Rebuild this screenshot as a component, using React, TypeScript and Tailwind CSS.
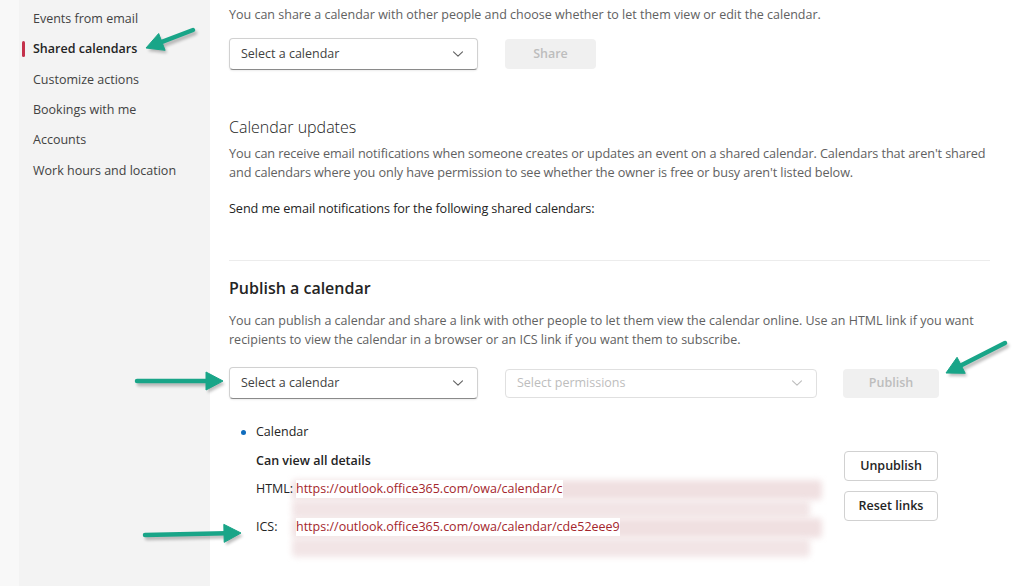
import React from "react";

const font = { fontFamily: '"Open Sans", "Noto Sans", Arial, sans-serif' };

function Chevron({ color = "#616161" }: { color?: string }) {
  return (
    <svg width="14" height="14" viewBox="0 0 14 14" fill="none">
      <path d="M2.5 4.8 L7 9.2 L11.5 4.8" stroke={color} strokeWidth="1.1" strokeLinecap="round" strokeLinejoin="round" />
    </svg>
  );
}

function Arrow({ x1, y1, x2, y2 }: { x1: number; y1: number; x2: number; y2: number }) {
  const dx = x2 - x1;
  const dy = y2 - y1;
  const len = Math.sqrt(dx * dx + dy * dy);
  const ux = dx / len;
  const uy = dy / len;
  const hl = 17;
  const hw = 9;
  const bx = x2 - ux * hl;
  const by = y2 - uy * hl;
  const px = -uy;
  const py = ux;
  const pts = `${x2},${y2} ${bx + px * hw},${by + py * hw} ${bx - px * hw},${by - py * hw}`;
  return (
    <g>
      <g transform="translate(2,3)" opacity="0.25" filter="url(#shadowblur)">
        <line x1={x1} y1={y1} x2={bx + ux * 2} y2={by + uy * 2} stroke="#000" strokeWidth="4.5" strokeLinecap="round" />
        <polygon points={pts} fill="#000" />
      </g>
      <line x1={x1} y1={y1} x2={bx + ux * 2} y2={by + uy * 2} stroke="#19a588" strokeWidth="4.5" strokeLinecap="round" />
      <polygon points={pts} fill="#19a588" strokeLinejoin="round" stroke="#19a588" strokeWidth="1" />
    </g>
  );
}

export default function App() {
  const nav = [
    "Events from email",
    "Shared calendars",
    "Customize actions",
    "Bookings with me",
    "Accounts",
    "Work hours and location",
  ];
  return (
    <div className="relative flex h-[586px] w-[1024px] overflow-hidden bg-white" style={font}>
      {/* Sidebar */}
      <div className="flex w-[210px] shrink-0 bg-[#f8f8f8]">
        <div className="ml-[19px] flex-1 bg-[#f3f3f3] pt-[4px]">
          {nav.map((n, i) => (
            <div key={n} className="relative flex h-[30.4px] items-center pl-[14px]">
              {i === 1 && <div className="absolute left-[3px] top-[7px] h-[16px] w-[3px] rounded-sm bg-[#c4314b]" />}
              <span className={i === 1 ? "text-[12.5px] font-semibold text-[#242424]" : "text-[12.5px] text-[#424242]"}>{n}</span>
            </div>
          ))}
        </div>
      </div>

      {/* Main */}
      <div className="flex-1 pl-[19px] pr-[26px]">
        <div className="pt-[5px] text-[12.5px] leading-[20px] text-[#616161]">
          You can share a calendar with other people and choose whether to let them view or edit the calendar.
        </div>
        <div className="mt-[13px] flex items-center gap-[27px]">
          <div className="flex h-[32px] w-[249px] items-center justify-between rounded-[4px] border border-[#d1d1d1] border-b-[#8a8a8a] pl-[11px] pr-[12px] shadow-[0_1px_2px_rgba(0,0,0,0.08)]">
            <span className="text-[12.5px] text-[#424242]">Select a calendar</span>
            <Chevron />
          </div>
          <div className="flex h-[30px] w-[91px] items-center justify-center rounded-[4px] bg-[#f0f0f0] text-[12.5px] font-semibold text-[#bdbdbd]">
            Share
          </div>
        </div>

        <div className="mt-[46px] text-[16px] font-light leading-[22px] text-[#242424]">Calendar updates</div>
        <div className="mt-[6px] text-[12.7px] leading-[19px] tracking-[-0.1px] text-[#616161]">
          You can receive email notifications when someone creates or updates an event on a shared calendar. Calendars that aren't shared and calendars where you only have permission to see whether the owner is free or busy aren't listed below.
        </div>
        <div className="mt-[17px] text-[12.7px] leading-[19px] tracking-[-0.1px] text-[#242424]">
          Send me email notifications for the following shared calendars:
        </div>

        <div className="mt-[42px] h-px w-[761px] bg-[#ececec]" />

        <div className="mt-[16px] text-[16px] font-semibold leading-[22px] text-[#242424]">Publish a calendar</div>
        <div className="mt-[12px] text-[12.5px] leading-[19px] text-[#616161]">
          You can publish a calendar and share a link with other people to let them view the calendar online. Use an HTML link if you want recipients to view the calendar in a browser or an ICS link if you want them to subscribe.
        </div>
        <div className="mt-[18px] flex items-center">
          <div className="flex h-[32px] w-[249px] items-center justify-between rounded-[4px] border border-[#d1d1d1] border-b-[#8a8a8a] pl-[11px] pr-[12px] shadow-[0_1px_2px_rgba(0,0,0,0.08)]">
            <span className="text-[12.5px] text-[#424242]">Select a calendar</span>
            <Chevron />
          </div>
          <div className="ml-[27px] flex h-[29px] w-[312px] items-center justify-between rounded-[4px] border border-[#e0e0e0] pl-[11px] pr-[12px]">
            <span className="text-[12.5px] text-[#bdbdbd]">Select permissions</span>
            <Chevron color="#bdbdbd" />
          </div>
          <div className="ml-[26px] flex h-[29px] w-[96px] items-center justify-center rounded-[4px] bg-[#f0f0f0] text-[12.5px] font-semibold text-[#bdbdbd]">
            Publish
          </div>
        </div>

        <div className="mt-[23px] flex">
          <div className="relative flex-1 pl-[12px]">
            <div className="flex items-center text-[12.5px] leading-[20px] text-[#242424]">
              <span className="mr-[10px] inline-block h-[5px] w-[5px] rounded-full bg-[#0f6cbd]" />
              Calendar
            </div>
            <div className="mt-[9px] pl-[15px] text-[12.5px] font-semibold leading-[20px] text-[#242424]">Can view all details</div>
            <div className="relative mt-[8px] pl-[15px]">
              <div className="absolute left-[51px] top-[1px] h-[20px] w-[530px] rounded-sm bg-[#f0e0e1] blur-[3px]" />
              <div className="absolute left-[51px] top-[21px] h-[18px] w-[518px] rounded-sm bg-[#f2e5e6] blur-[3px]" />
              <div className="absolute left-[51px] top-[39px] h-[20px] w-[530px] rounded-sm bg-[#f0e0e1] blur-[3px]" />
              <div className="absolute left-[51px] top-[59px] h-[19px] w-[518px] rounded-sm bg-[#f2e5e6] blur-[3px]" />
              <div className="relative flex h-[20px] items-center text-[12.5px] text-[#242424]">
                <span className="w-[40px]">HTML:</span>
                <span className="bg-white text-[#a4262c]">https://outlook.office365.com/owa/calendar/c</span>
              </div>
              <div className="h-[18px]" />
              <div className="relative flex h-[20px] items-center text-[12.5px] text-[#242424]">
                <span className="w-[40px]">ICS:</span>
                <span className="bg-white text-[#a4262c]">https://outlook.office365.com/owa/calendar/cde52eee9</span>
              </div>
            </div>
          </div>
          <div className="mr-[60px] mt-[29px] flex w-[94px] flex-col gap-[10px]">
            <div className="flex h-[30px] items-center justify-center rounded-[4px] border border-[#d1d1d1] bg-white text-[12.5px] font-semibold text-[#242424]">
              Unpublish
            </div>
            <div className="flex h-[30px] items-center justify-center rounded-[4px] border border-[#d1d1d1] bg-white text-[12.5px] font-semibold text-[#242424]">
              Reset links
            </div>
          </div>
        </div>
      </div>

      {/* Annotation arrows */}
      <svg className="pointer-events-none absolute left-0 top-0" width="1024" height="586" viewBox="0 0 1024 586">
        <defs>
          <filter id="shadowblur" x="-20%" y="-50%" width="140%" height="200%">
            <feGaussianBlur stdDeviation="1.5" />
          </filter>
        </defs>
        <Arrow x1={193} y1={30} x2={146} y2={48} />
        <Arrow x1={137} y1={381} x2={223} y2={381} />
        <Arrow x1={1005} y1={343} x2={946} y2={373} />
        <Arrow x1={145} y1={535} x2={241} y2={533} />
      </svg>
    </div>
  );
}
